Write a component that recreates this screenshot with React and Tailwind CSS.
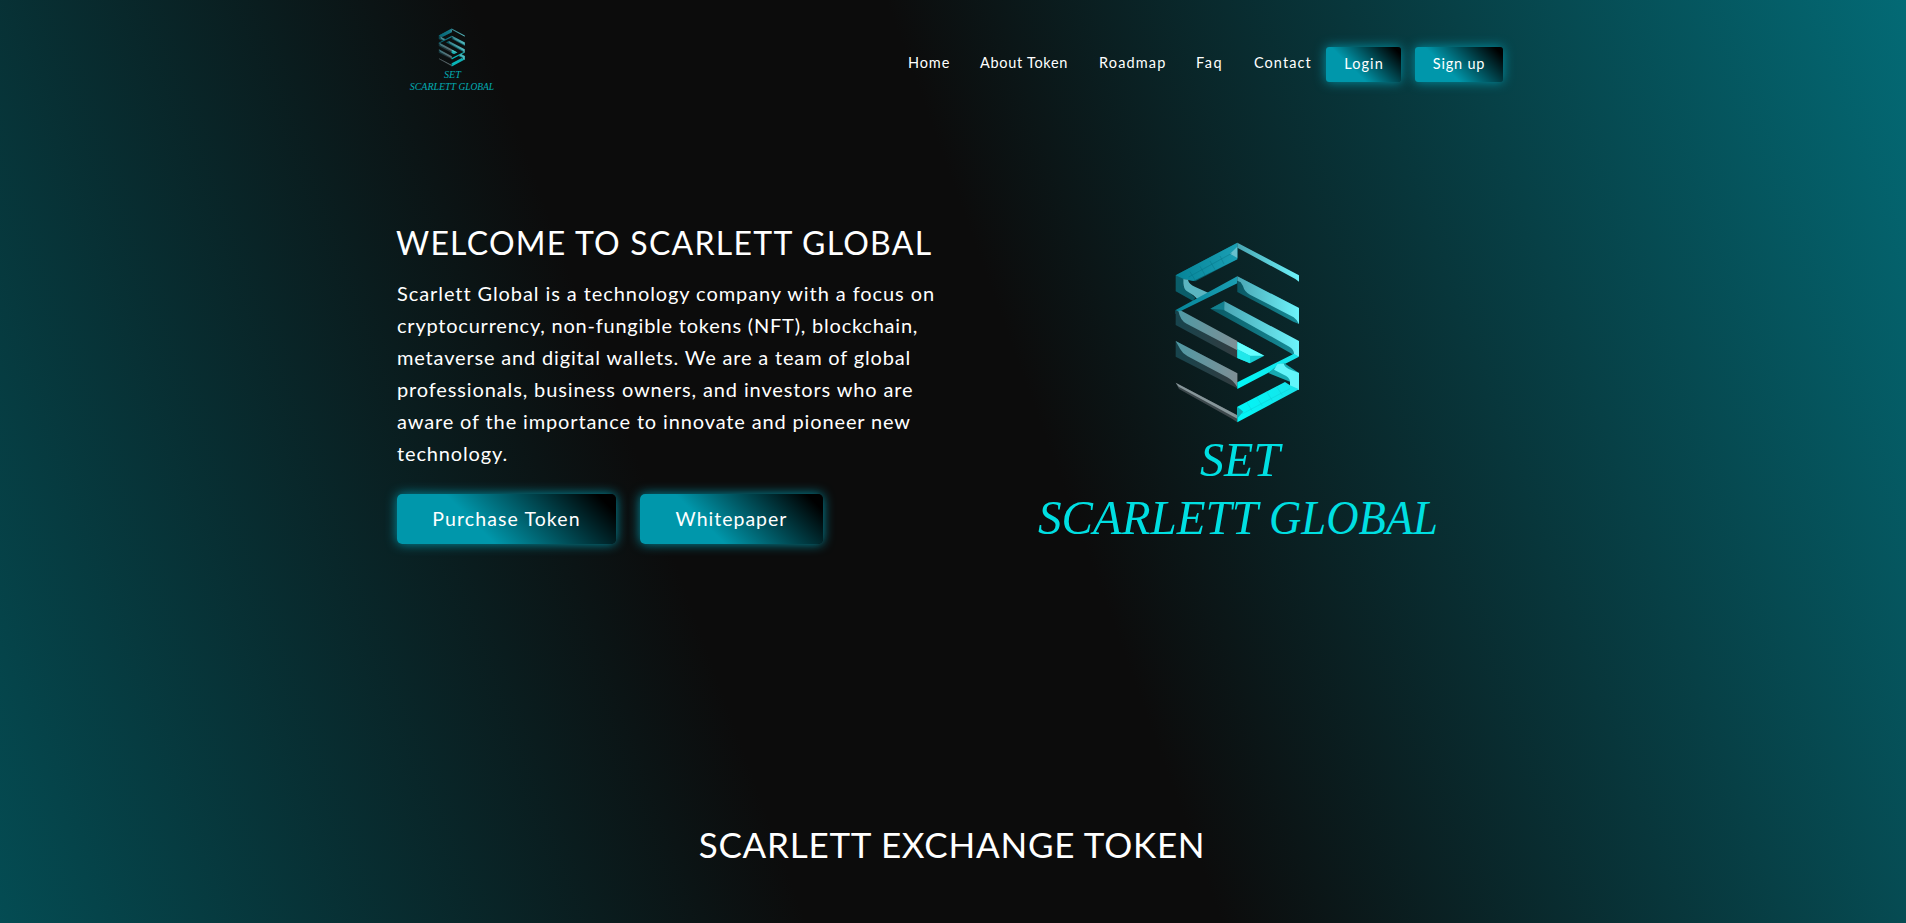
const NAV = [
  { label: "Home", cls: "w-[72px] tracking-[0.9px]" },
  { label: "About Token", cls: "w-[119px] tracking-[0.7px]" },
  { label: "Roadmap", cls: "w-[97px] tracking-[1.15px]" },
  { label: "Faq", cls: "w-[58px] tracking-[1.6px]" },
  { label: "Contact", cls: "w-[72px] tracking-[1.05px]" },
];

const INTRO = [
  { text: "Scarlett Global is a technology company with a focus on", cls: "tracking-[0.92px]" },
  { text: "cryptocurrency, non-fungible tokens (NFT), blockchain,", cls: "tracking-[0.78px]" },
  { text: "metaverse and digital wallets. We are a team of global", cls: "tracking-[0.83px]" },
  { text: "professionals, business owners, and investors who are", cls: "tracking-[0.87px]" },
  { text: "aware of the importance to innovate and pioneer new", cls: "tracking-[0.86px]" },
  { text: "technology.", cls: "tracking-[0.85px]" },
];

const GLOW =
  "bg-[linear-gradient(45deg,#0097ab_36.5%,#000_93%)] shadow-[0_0_12px_rgba(0,151,171,0.95)]";

function Logo({ className, id }) {
  const g = (n) => `url(#${id}-${n})`;
  return (
    <svg viewBox="1030 235 415 310" className={className} role="img" aria-label="Scarlett Global">
      <defs>
        <linearGradient id={`${id}-a`} x1="0" x2="1">
          <stop offset="0" stopColor="#068498" />
          <stop offset="1" stopColor="#1a9fb4" />
        </linearGradient>
        <linearGradient id={`${id}-b`} x1="0" x2="1">
          <stop offset="0" stopColor="#4aa6b4" />
          <stop offset="1" stopColor="#6df4fb" />
        </linearGradient>
        <linearGradient id={`${id}-c`} x1="0" x2="1">
          <stop offset="0" stopColor="#0a5864" />
          <stop offset="1" stopColor="#168c97" />
        </linearGradient>
        <linearGradient id={`${id}-d`} x1="0" x2="1">
          <stop offset="0" stopColor="#4f99a4" />
          <stop offset="1" stopColor="#7f8f95" />
        </linearGradient>
        <linearGradient id={`${id}-e`} x1="0" x2="1">
          <stop offset="0" stopColor="#17444d" />
          <stop offset="1" stopColor="#333c40" />
        </linearGradient>
        <linearGradient id={`${id}-f`} x1="0" x2="1">
          <stop offset="0" stopColor="#00f8f8" />
          <stop offset="1" stopColor="#19e1e8" />
        </linearGradient>
      </defs>
      <g transform="translate(1140 230) scale(0.33333)">
        {/* upper arm */}
        <path d="M107 136 292 38 292 88 166 154 131 147 131 170 166 204 158 212 107 184Z" fill="#0a5d69" />
        <path d="M107 136 292 38 292 88 160 153 131 147Z" fill={g("a")} />
        <path d="M130 147 144 149Q146 162 166 171L206 189 172 207 160 196 140 183Q131 177 130 160Z" fill="#5bb5c1" />
        <path d="M292 50 292 84 270 71Z" fill="#67c1ce" />
        <path d="M292 38 477 136 477 155 466 147 292 53Z" fill={g("b")} />
        <path d="M150 125 165 150M180 109 195 135M210 93 225 119M240 78 252 102M146 141 275 70" stroke="#067082" strokeWidth="2" fill="none" opacity="0.6" />
        {/* second band */}
        <path d="M107 240 292 139 292 160 124 242 107 252Z" fill={g("a")} />
        <path d="M292 139 477 234 477 282 460 275 292 186Z" fill={g("c")} />
        <path d="M292 139 477 234 477 282Q470 268 461 262L330 194Q313 185 309 168L302 157 292 152Z" fill={g("b")} />
        {/* centre bands */}
        <path d="M107 240 292 337 292 385 107 285Z" fill={g("e")} />
        <path d="M115 242 124 242 292 333 292 361 140 281Q121 272 115 242Z" fill={g("d")} />
        <path d="M211 236 253 214 253 240 292 247 464 346 464 378 450 368Z" fill={g("c")} />
        <path d="M211 236 253 214 256 240Z" fill="#127f8e" />
        <path d="M253 214 477 333 477 380 462 375Q464 360 448 350L253 241Z" fill={g("b")} />
        <path d="M292 335 373 377 330 400 292 384Z" fill="#16cdd2" />
        <path d="M292 335 373 377 330 377 292 358Z" fill="#65ffff" />
        <path d="M292 358 330 377 330 400 292 384Z" fill="#20e8ea" />
        {/* lower left */}
        <path d="M107 333 292 430 292 475 107 380Z" fill={g("e")} />
        <path d="M107 333 292 430 292 472Q279 450 262 442L143 379Q128 371 120 356Z" fill={g("d")} />
        <path d="M107 458 292 556 292 577 276 566 117 477Z" fill="#3d484c" />
        <path d="M107 458 292 556 292 566 116 470Z" fill="#87969a" />
        {/* lower arm */}
        <path d="M292 457 462 371 477 380 430 404 385 428 292 477Z" fill={g("f")} />
        <path d="M410 408 431 398 477 429 477 480 450 470 450 455 385 429Z" fill="#16a9b0" />
        <path d="M412 403 431 400Q433 411 446 417L477 429 477 480 450 472 450 454Q448 441 431 434L402 419Z" fill="#62f5fa" />
        <path d="M292 530 435 456 450 466 477 478 292 577Z" fill={g("f")} />
        <path d="M292 530 310 545 292 565Z" fill="#12aab2" />
        <path d="M320 516 337 543M350 501 367 528M380 485 397 512M410 470 427 496M306 552 450 476" stroke="#0ccbd2" strokeWidth="2" fill="none" opacity="0.7" />
      </g>
      <g fill="#00dfe2" fontFamily="'Liberation Serif', serif" fontStyle="italic" fontSize="49">
        <text x="1200" y="475.7" textLength="80" lengthAdjust="spacingAndGlyphs">SET</text>
        <text x="1038" y="534" textLength="220" lengthAdjust="spacingAndGlyphs">SCARLETT</text>
        <text x="1269" y="534" textLength="169" lengthAdjust="spacingAndGlyphs">GLOBAL</text>
      </g>
    </svg>
  );
}

export default function App() {
  return (
    <div className="h-[923px] overflow-hidden bg-[linear-gradient(70deg,#044c53_0%,#0c0c0c_36%,#0c0c0c_54.5%,#036a75_100%)] font-['Lato',sans-serif] text-white">
      <div className="mx-auto flex w-[1114px] flex-col">
        <header className="flex h-[130px] items-start justify-between pr-[7px]">
          <Logo id="brand" className="mt-[26.5px] ml-[12px] h-[65.4px] w-[87.6px] overflow-visible opacity-75" />
          <nav className="mt-[47px] flex text-[14.5px] leading-[31px] whitespace-nowrap">
            {NAV.map((n) => (
              <a key={n.label} className={n.cls}>
                {n.label}
              </a>
            ))}
            <button className={`flex h-[35px] w-[75px] justify-center rounded-[3px] pl-px leading-[33px] tracking-[1.1px] ${GLOW}`}>
              Login
            </button>
            <button className={`ml-[14px] flex h-[35px] w-[88px] justify-center rounded-[3px] leading-[33px] tracking-[0.8px] ${GLOW}`}>
              Sign up
            </button>
          </nav>
        </header>

        <section className="flex h-[678px] items-start">
          <div className="w-[634px] whitespace-nowrap">
            <h1 className="mt-[90px] text-[32px] leading-[46px] tracking-[1.25px]">WELCOME TO SCARLETT GLOBAL</h1>
            <p className="mt-[11px] ml-px text-[20px] leading-[32px]">
              {INTRO.map((l) => (
                <span key={l.text} className={`block ${l.cls}`}>
                  {l.text}
                </span>
              ))}
            </p>
            <div className="mt-[25px] ml-px flex gap-6 text-[19.5px]">
              <button className={`h-[50px] w-[219px] rounded-[5px] pb-px tracking-[1.1px] ${GLOW}`}>Purchase Token</button>
              <button className={`h-[50px] w-[183px] rounded-[5px] pb-px tracking-[1px] ${GLOW}`}>Whitepaper</button>
            </div>
          </div>
          <Logo id="hero" className="mt-[105px] h-[310px] w-[415px] shrink-0 overflow-visible" />
        </section>

        <h2 className="mt-[12px] pr-[2px] text-center text-[35px] leading-[48px] tracking-[0.76px]">SCARLETT EXCHANGE TOKEN</h2>
      </div>
    </div>
  );
}
